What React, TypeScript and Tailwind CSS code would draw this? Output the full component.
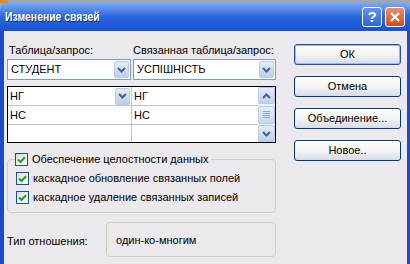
import React from "react";

const font = { fontFamily: '"Liberation Sans", Arial, sans-serif' };

/* ─── small XP-ish pieces ─── */
function Chevron({ up = false }: { up?: boolean }) {
  return (
    <svg width="9" height="6" viewBox="0 0 9 6" className={up ? "rotate-180" : ""}>
      <path d="M1 1 L4.5 4.5 L8 1" fill="none" stroke="#4d6185" strokeWidth="2" />
    </svg>
  );
}

function DropButton() {
  return (
    <div className="w-[15px] h-[17px] rounded-[2px] border border-[#b8cbe8] bg-gradient-to-b from-[#e3ecfb] to-[#bccfee] flex items-center justify-center">
      <Chevron />
    </div>
  );
}

function Combo({ value, width }: { value: string; width: string }) {
  return (
    <div className={`${width} h-[21px] bg-white border border-[#7f9db9] flex items-center justify-between pl-[3px] pr-[1px]`}>
      <span className="text-black">{value}</span>
      <DropButton />
    </div>
  );
}

function Check({ label }: { label: string }) {
  return (
    <div className="flex items-center gap-[4px] h-[13px] whitespace-nowrap">
      <div className="w-[13px] h-[13px] border border-[#1c5180] bg-gradient-to-br from-[#dcdcd7] to-white flex items-center justify-center">
        <svg width="9" height="8" viewBox="0 0 9 8">
          <path d="M1 3.5 L3.5 6 L8 1.2" fill="none" stroke="#21a121" strokeWidth="2" />
        </svg>
      </div>
      <span className="text-black leading-[13px]">{label}</span>
    </div>
  );
}

function Btn({ label, primary = false }: { label: string; primary?: boolean }) {
  return (
    <div
      className={`w-[107px] h-[21px] rounded-[3px] border bg-gradient-to-b from-white via-[#f4f4f0] to-[#d6dbe8] flex items-center justify-center text-[11px] text-black ${
        primary ? "border-[#2a4f9e] shadow-[inset_0_0_0_1px_#9bb7ea]" : "border-[#003c74]"
      }`}
    >
      {label}
    </div>
  );
}

export default function App() {
  return (
    <div className="w-[410px] h-[264px] overflow-hidden flex flex-col bg-[#9ea6b6]" style={font}>
      {/* bit of the window behind */}
      <div className="h-[3px] flex">
        <div className="w-[8px] bg-[#e08a2a]" />
      </div>

      {/* ── Title bar ── */}
      <div className="h-[28px] rounded-t-[7px] bg-gradient-to-b from-[#7aa8f2] via-[#2865dc] to-[#1954d0] flex items-center justify-between pl-[5px] pr-[5px]">
        <span className="inline-block origin-left scale-x-[0.8] whitespace-nowrap text-white font-bold text-[13px] [text-shadow:1px_1px_0_#0a246a]">
          Изменение связей
        </span>
        <div className="flex gap-[3px]">
          <div className="w-[20px] h-[20px] rounded-[3px] border border-white bg-gradient-to-b from-[#5f95f2] to-[#2a64d6] flex items-center justify-center text-white font-bold text-[15px]">
            ?
          </div>
          <div className="w-[20px] h-[20px] rounded-[3px] border border-white bg-gradient-to-b from-[#e89070] to-[#cf4a1e] flex items-center justify-center">
            <svg width="12" height="12" viewBox="0 0 12 12">
              <path d="M2 2 L10 10 M10 2 L2 10" stroke="white" strokeWidth="2.2" />
            </svg>
          </div>
        </div>
      </div>

      {/* ── Body ── */}
      <div className="flex-1 flex bg-[#ebe9ed] border-l-[4px] border-r-[3px] border-[#1a4cc8]">
        {/* left column */}
        <div className="w-[270px] ml-[3px] pt-[12px] flex flex-col text-[11px]">
          <div className="flex h-[15px] items-center whitespace-nowrap">
            <span className="w-[126px] pl-[2px]">Таблица/запрос:</span>
            <span>Связанная таблица/запрос:</span>
          </div>

          <div className="flex gap-[2px] mt-[1px]">
            <Combo value="СТУДЕНТ" width="w-[124px]" />
            <Combo value="УСПІШНІСТЬ" width="w-[143px]" />
          </div>

          {/* field grid */}
          <div className="mt-[6px] w-[269px] h-[57px] border border-black bg-white flex">
            <div className="flex-1 flex flex-col">
              <div className="h-[19px] flex border-b border-[#c6c3c6]">
                <div className="w-[124px] flex items-center justify-between pl-[2px] pr-[1px] border-r border-[#c6c3c6]">
                  <span>НГ</span>
                  <DropButton />
                </div>
                <div className="flex-1 flex items-center pl-[2px]">НГ</div>
              </div>
              <div className="h-[19px] flex border-b border-[#c6c3c6]">
                <div className="w-[124px] flex items-center pl-[2px] border-r border-[#c6c3c6]">НС</div>
                <div className="flex-1 flex items-center pl-[2px]">НС</div>
              </div>
              <div className="flex-1 flex">
                <div className="w-[124px] border-r border-[#c6c3c6]" />
              </div>
            </div>
            {/* scrollbar */}
            <div className="w-[17px] bg-[#f3f1ec] flex flex-col justify-between">
              <div className="h-[17px] rounded-[2px] border border-[#b8cbe8] bg-gradient-to-b from-[#e3ecfb] to-[#bccfee] flex items-center justify-center">
                <Chevron up />
              </div>
              <div className="h-[18px] rounded-[2px] border border-[#b8cbe8] bg-gradient-to-b from-[#e3ecfb] to-[#c6d6f2] flex flex-col items-center justify-center gap-[1px]">
                <div className="w-[7px] h-px bg-[#8ea4cc]" />
                <div className="w-[7px] h-px bg-[#8ea4cc]" />
                <div className="w-[7px] h-px bg-[#8ea4cc]" />
                <div className="w-[7px] h-px bg-[#8ea4cc]" />
              </div>
              <div className="h-[17px] rounded-[2px] border border-[#b8cbe8] bg-gradient-to-b from-[#e3ecfb] to-[#bccfee] flex items-center justify-center">
                <Chevron />
              </div>
            </div>
          </div>

          {/* integrity group */}
          <div className="relative mt-[16px] w-[269px] h-[54px] border border-[#d0d0bf] rounded-[4px] flex flex-col gap-[6px] pl-[8px] pt-[12px]">
            <div className="absolute -top-[7px] left-[7px] bg-[#ebe9ed] pr-[3px]">
              <Check label="Обеспечение целостности данных" />
            </div>
            <Check label="каскадное обновление связанных полей" />
            <Check label="каскадное удаление связанных записей" />
          </div>

          {/* relationship type */}
          <div className="mt-[9px] flex items-start">
            <span className="w-[99px] mt-[11px]">Тип отношения:</span>
            <div className="w-[170px] h-[35px] border border-[#d0d0bf] rounded-[4px] pl-[9px] pt-[9px]">
              один-ко-многим
            </div>
          </div>
        </div>

        {/* buttons */}
        <div className="ml-[17px] pt-[13px] flex flex-col gap-[11px]">
          <Btn label="ОК" primary />
          <Btn label="Отмена" />
          <Btn label="Объединение..." />
          <Btn label="Новое.." />
        </div>
      </div>
    </div>
  );
}
